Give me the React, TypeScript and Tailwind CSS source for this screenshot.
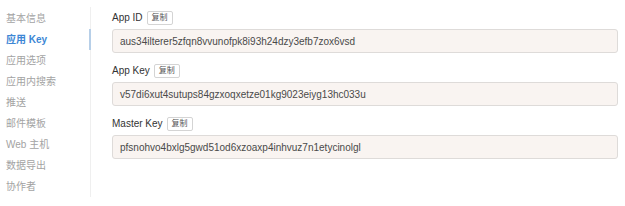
import React from "react";

const navItems = ["基本信息", "应用 Key", "应用选项", "应用内搜索", "推送", "邮件模板", "Web 主机", "数据导出", "协作者"];

const fields = [
  { label: "App ID", value: "aus34ilterer5zfqn8vvunofpk8i93h24dzy3efb7zox6vsd" },
  { label: "App Key", value: "v57di6xut4sutups84gzxoqxetze01kg9023eiyg13hc033u" },
  { label: "Master Key", value: "pfsnohvo4bxlg5gwd51od6xzoaxp4inhvuz7n1etycinolgl" },
];

export default function App() {
  return (
    <div
      className="flex w-[625px] h-[206px] bg-white"
      style={{ fontFamily: '"Liberation Sans", "Noto Sans CJK SC", sans-serif' }}
    >
      <div className="w-[91px] shrink-0 pt-[7px]">
        <div className="h-[190px] border-r border-[#efefef] flex flex-col pt-[1px]">
          {navItems.map((item, i) => (
            <div
              key={item}
              className={
                "relative h-[21px] leading-[21px] pl-[6px] text-[10px] " +
                (i === 1 ? "text-[#3d87d5] font-bold" : "text-[#a3a3a3]")
              }
            >
              {item}
              {i === 1 && <div className="absolute right-[-1px] top-0 w-[2px] h-[21px] bg-[#b7cfe8]" />}
            </div>
          ))}
        </div>
      </div>
      <div className="flex-1 pl-[21px] pr-[7px] pt-[11px] flex flex-col gap-[11px]">
        {fields.map((f) => (
          <div key={f.label} className="flex flex-col gap-[4px]">
            <div className="flex items-center h-[14px] gap-[4px]">
              <span className="text-[10px] text-[#333333] leading-[14px]">{f.label}</span>
              <span className="h-[14px] px-[4px] border border-[#d4d4d4] rounded-[2px] text-[8px] leading-[12px] text-[#555555] bg-white">
                复制
              </span>
            </div>
            <div className="h-[24px] border border-[#dedbd9] rounded-[3px] bg-[#f9f4f1] flex items-center pl-[7px] text-[10px] text-[#4a4a4a]">
              {f.value}
            </div>
          </div>
        ))}
      </div>
    </div>
  );
}
